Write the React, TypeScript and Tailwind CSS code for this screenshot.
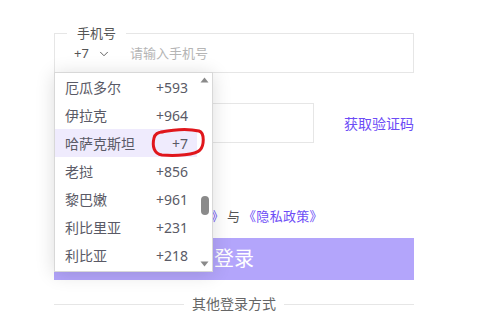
import { ChevronDown } from "lucide-react";

type Country = {
  name: string;
  code: string;
};

const countries: Country[] = [
  { name: "厄瓜多尔", code: "+593" },
  { name: "伊拉克", code: "+964" },
  { name: "哈萨克斯坦", code: "+7" },
  { name: "老挝", code: "+856" },
  { name: "黎巴嫩", code: "+961" },
  { name: "利比里亚", code: "+231" },
  { name: "利比亚", code: "+218" },
];

const font = "font-['Noto_Sans','Noto_Sans_CJK_SC',sans-serif]";

const App = () => {
  return (
    <div className={`relative w-[494px] h-[315px] overflow-hidden bg-white ${font}`}>
      <div className="ml-[54px] w-[360px] pt-[33px]">
        {/* Phone field */}
        <div className="relative h-[40px] border border-[#e6e6e6]">
          <span className="absolute -top-[10px] left-[12px] bg-white px-[10px] text-[13px] leading-[18px] text-[#555]">
            手机号
          </span>
          <div className="flex h-full items-center pl-[19px] pt-[2px] text-[13px]">
            <span className="text-[#555]">+7</span>
            <ChevronDown size={14} strokeWidth={1.6} className="ml-[8px] text-[#555]" />
            <span className="ml-[19px] text-[#b5b5b5]">请输入手机号</span>
          </div>
        </div>

        {/* Verification code */}
        <div className="mt-[30px] flex items-center">
          <div className="h-[40px] w-[260px] border border-[#e6e6e6]" />
          <span className="ml-auto text-[14px] text-[#6c4cf6]">获取验证码</span>
        </div>

        {/* Agreement */}
        <div className="mt-[64px] flex pl-[1px] text-[13px] leading-[18px] text-[#555]">
          <span>我已阅读并同意</span>
          <span className="text-[#6c4cf6]">《用户协议》</span>
          <span className="mx-[3px]">与</span>
          <span className="tracking-[0.3px] text-[#6c4cf6]">《隐私政策》</span>
        </div>

        {/* Login */}
        <button className="mt-[13px] flex h-[42px] w-full items-center justify-center bg-[#b3a5fb] text-[20px] text-white">
          登录
        </button>

        {/* Other login */}
        <div className="mt-[15px] flex items-center">
          <div className="h-px flex-1 bg-[#e6e6e6]" />
          <span className="mx-[8px] text-[14px] leading-[18px] text-[#666]">其他登录方式</span>
          <div className="h-px flex-1 bg-[#e6e6e6]" />
        </div>
      </div>

      {/* Country dropdown */}
      <div className="absolute left-[54px] top-[72px] flex h-[200px] w-[159px] border border-[#d8d8d8] bg-white shadow-[0_2px_18px_rgba(0,0,0,0.14)]">
        <ul className="flex-1">
          {countries.map((c) => (
            <li
              key={c.name}
              className={`flex h-[28px] items-center justify-between pl-[10px] pr-[9px] text-[14px] text-[#5a5a66] ${
                c.code === "+7" ? "bg-[#efebfd]" : ""
              }`}
            >
              <span>{c.name}</span>
              <span>{c.code}</span>
            </li>
          ))}
        </ul>
        <div className="flex w-[15px] flex-col items-center py-[4px]">
          <svg width="9" height="6" viewBox="0 0 9 6">
            <path d="M0.5 5.5 L4.5 0.5 L8.5 5.5 Z" fill="#8a8a8a" />
          </svg>
          <div className="mt-[113px] h-[19px] w-[8px] rounded-full bg-[#8a8a8a]" />
          <svg width="9" height="6" viewBox="0 0 9 6" className="mt-auto">
            <path d="M0.5 0.5 L4.5 5.5 L8.5 0.5 Z" fill="#8a8a8a" />
          </svg>
        </div>
      </div>

      {/* Red annotation */}
      <svg className="pointer-events-none absolute left-0 top-0" width="494" height="315">
        <path
          d="M161 132 C176 129 191 129 199 131 C205 133 204 146 200 150 C196 155 176 156 162 155 C154 154 152 146 154 138 C155 134 158 132 163 132"
          fill="none"
          stroke="#e0161c"
          strokeWidth="3"
          strokeLinecap="round"
        />
      </svg>
    </div>
  );
};

export default App;
